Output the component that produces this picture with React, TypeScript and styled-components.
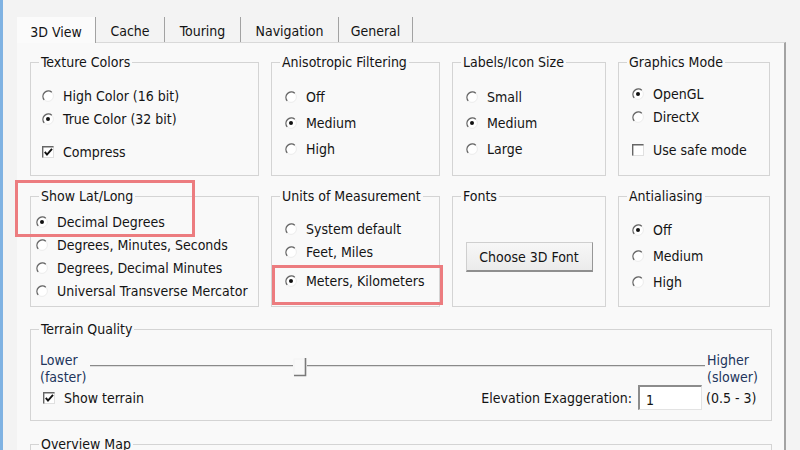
import React from "react"
import styled, { createGlobalStyle } from "styled-components"

const GlobalStyle = createGlobalStyle`
  html, body {
    margin: 0;
    padding: 0;
    overflow: hidden;
  }
  body {
    background: #f3f3f3;
    font-family: "DejaVu Sans Condensed", "DejaVu Sans", sans-serif;
    font-size: 14px;
    color: #141414;
  }
`

const tabs = [
  { text: "3D View", width: 79, active: true },
  { text: "Cache", width: 69 },
  { text: "Touring", width: 76 },
  { text: "Navigation", width: 98 },
  { text: "General", width: 74 },
]

const Radio = ({ checked }: { checked?: boolean }) => (
  <svg width="12" height="12" viewBox="0 0 12 12">
    <circle cx="6" cy="6" r="5.4" fill="#fff" stroke="#ececec" />
    <path d="M 9.8 2.2 A 5.4 5.4 0 0 0 2.2 9.8" fill="none" stroke="#666" strokeWidth="1.3" />
    {checked && <circle cx="6" cy="6" r="2" fill="#111" />}
  </svg>
)

const Check = ({ checked }: { checked?: boolean }) => (
  <svg width="12" height="12" viewBox="0 0 12 12">
    <rect x="0.5" y="0.5" width="11" height="11" fill="#fff" stroke="#e0e0e0" />
    <path d="M 0.7 11.5 V 0.7 H 11.5" fill="none" stroke="#666" strokeWidth="1.4" />
    {checked && <path d="M 2.8 5.8 L 5 8.6 L 10 2.8" fill="none" stroke="#111" strokeWidth="1.9" />}
  </svg>
)

type Item = { text: string; checked?: boolean; box?: boolean; extra?: number }

const groupsTop: { title: string; top: number; gap?: number; inset?: number; items: Item[] }[] = [
  {
    title: "Texture Colors",
    top: 14,
    inset: 11,
    items: [
      { text: "High Color (16 bit)" },
      { text: "True Color (32 bit)", checked: true },
      { text: "Compress", checked: true, box: true, extra: 10 },
    ],
  },
  {
    title: "Anisotropic Filtering",
    top: 15,
    gap: 3,
    items: [{ text: "Off" }, { text: "Medium", checked: true }, { text: "High" }],
  },
  {
    title: "Labels/Icon Size",
    top: 15,
    gap: 3,
    items: [{ text: "Small" }, { text: "Medium", checked: true }, { text: "Large" }],
  },
  {
    title: "Graphics Mode",
    top: 12,
    items: [
      { text: "OpenGL", checked: true },
      { text: "DirectX" },
      { text: "Use safe mode", box: true, extra: 10 },
    ],
  },
]

const OptionRows = ({ items }: { items: Item[] }) => (
  <>
    {items.map((item, i) => (
      <Option key={i} $extra={item.extra}>
        {item.box ? <Check checked={item.checked} /> : <Radio checked={item.checked} />}
        <span>{item.text}</span>
      </Option>
    ))}
  </>
)

const terrainValue = 33

const App = () => {
  return (
    <Window>
      <GlobalStyle />
      <TabStrip>
        {tabs.map((t) => (
          <Tab key={t.text} $width={t.width} $active={t.active}>
            {t.text}
          </Tab>
        ))}
      </TabStrip>
      <Panel>
        <TopGrid>
          {groupsTop.map((g) => (
            <Group key={g.title}>
              <Legend>{g.title}</Legend>
              <OptionList $top={g.top} $gap={g.gap} $inset={g.inset}>
                <OptionRows items={g.items} />
              </OptionList>
            </Group>
          ))}

          <Group>
            <Legend>Show Lat/Long</Legend>
            <OptionList $top={6} $inset={5}>
              <OptionRows
                items={[
                  { text: "Decimal Degrees", checked: true },
                  { text: "Degrees, Minutes, Seconds" },
                  { text: "Degrees, Decimal Minutes" },
                  { text: "Universal Transverse Mercator" },
                ]}
              />
            </OptionList>
          </Group>
          <Group>
            <Legend>Units of Measurement</Legend>
            <OptionList $top={13}>
              <OptionRows
                items={[
                  { text: "System default" },
                  { text: "Feet, Miles" },
                  { text: "Meters, Kilometers", checked: true, extra: 6 },
                ]}
              />
            </OptionList>
          </Group>
          <Group>
            <Legend>Fonts</Legend>
            <Button type="button">Choose 3D Font</Button>
          </Group>
          <Group>
            <Legend>Antialiasing</Legend>
            <OptionList $top={14} $gap={3}>
              <OptionRows items={[{ text: "Off", checked: true }, { text: "Medium" }, { text: "High" }]} />
            </OptionList>
          </Group>

          <Highlight $left={-15} $top={126} $width={180} $height={57} />
          <Highlight $left={242} $top={211} $width={171} $height={40} />
        </TopGrid>

        <Group $mt={14} $height={100}>
          <Legend>Terrain Quality</Legend>
          <TerrainBody>
            <SliderLabel>
              Lower
              <br />
              (faster)
            </SliderLabel>
            <Slider>
              <Track />
              <Thumb style={{ left: `${terrainValue}%` }}>
                <svg width="14" height="19" viewBox="0 0 14 19">
                  <path d="M 1 18 V 1 H 12" fill="none" stroke="#f4f4f4" strokeWidth="1.2" />
                  <path d="M 12.5 0 V 17.5 H 1" fill="none" stroke="#7a7a7a" strokeWidth="1.6" />
                </svg>
              </Thumb>
            </Slider>
            <SliderLabel $right>
              Higher
              <br />
              (slower)
            </SliderLabel>
            <BottomRow>
              <Option as="label" $inline>
                <Check checked />
                <span>Show terrain</span>
              </Option>
              <Field>
                <span>Elevation Exaggeration:</span>
                <Input defaultValue="1" />
              </Field>
            </BottomRow>
            <Range>(0.5 - 3)</Range>
          </TerrainBody>
        </Group>

        <Group $mt={15} $height={60}>
          <Legend>Overview Map</Legend>
        </Group>
      </Panel>
    </Window>
  )
}

export default App

const Window = styled.div`
  height: 450px;
  box-sizing: border-box;
  overflow: hidden;
  border-left: 3px solid #7fb2e2;
  padding: 17px 0 0 14px;
  background: #f3f3f3;
`

const TabStrip = styled.div`
  display: flex;
  height: 25px;
`

const Tab = styled.div<{ $width: number; $active?: boolean }>`
  width: ${(p) => p.$width}px;
  box-sizing: border-box;
  display: flex;
  align-items: center;
  justify-content: center;
  padding-top: 3px;
  border-right: 1px solid #a2a2a2;
  background: ${(p) => (p.$active ? "#fbfbfb" : "transparent")};
  position: relative;
  z-index: ${(p) => (p.$active ? 1 : 0)};
  height: ${(p) => (p.$active ? 26 : 25)}px;
  white-space: nowrap;
`

const Panel = styled.div`
  width: 769px;
  height: 420px;
  box-sizing: border-box;
  background: #f9f9f9;
  border-top: 1px solid #d9d9d9;
  border-right: 2px solid #a3a3a3;
  padding: 11px 12px 0 13px;
`

const TopGrid = styled.div`
  position: relative;
  display: grid;
  grid-template-columns: 229px 169px 154px 152px;
  grid-template-rows: 122px 119px;
  column-gap: 12px;
  row-gap: 12px;
`

const Group = styled.fieldset<{ $mt?: number; $height?: number }>`
  margin: ${(p) => p.$mt ?? 0}px 0 0 0;
  padding: 0;
  min-width: 0;
  box-sizing: border-box;
  border: 1px solid #d4d4d4;
  ${(p) => (p.$height ? `height: ${p.$height}px;` : "")}
`

const Legend = styled.legend`
  margin-left: 8px;
  padding: 0 2px;
  line-height: 16px;
`

const OptionList = styled.div<{ $top: number; $gap?: number; $inset?: number }>`
  display: flex;
  flex-direction: column;
  gap: ${(p) => p.$gap ?? 0}px;
  padding: ${(p) => p.$top}px 0 0 ${(p) => p.$inset ?? 13}px;
`

const Option = styled.label<{ $extra?: number; $inline?: boolean }>`
  display: flex;
  align-items: center;
  gap: 9px;
  height: 23px;
  margin-top: ${(p) => p.$extra ?? 0}px;
  white-space: nowrap;
  ${(p) => (p.$inline ? "padding-left: 3px;" : "")}
`

const Button = styled.button`
  display: block;
  margin: 38px auto 0;
  width: 127px;
  height: 30px;
  font: inherit;
  color: inherit;
  background: linear-gradient(#f7f7f7, #ebebeb);
  border: 1px solid #cfcfcf;
  border-right-color: #979797;
  border-bottom: 2px solid #8f8f8f;
  border-radius: 0;
  padding: 0;
`

const Highlight = styled.div<{ $left: number; $top: number; $width: number; $height: number }>`
  position: absolute;
  left: ${(p) => p.$left}px;
  top: ${(p) => p.$top}px;
  width: ${(p) => p.$width}px;
  height: ${(p) => p.$height}px;
  box-sizing: border-box;
  border: 3px solid #ec7c7f;
  pointer-events: none;
`

const TerrainBody = styled.div`
  display: grid;
  grid-template-columns: 50px 615px 1fr;
  grid-template-rows: 33px 25px;
  padding: 15px 0 0 9px;
`

const SliderLabel = styled.div<{ $right?: boolean }>`
  line-height: 17px;
  color: #22355c;
  padding-left: ${(p) => (p.$right ? 2 : 0)}px;
  white-space: nowrap;
`

const Slider = styled.div`
  position: relative;
  padding-top: 13px;
`

const Track = styled.div`
  height: 1px;
  background: #8a8a8a;
  border-bottom: 1px solid #dedede;
`

const Thumb = styled.div`
  position: absolute;
  top: 6px;
  width: 14px;
  height: 19px;
  background: #f9f9f9;
  line-height: 0;
`

const BottomRow = styled.div`
  grid-column: 1 / 3;
  display: flex;
  align-items: center;
  justify-content: space-between;
  padding-right: 3px;
`

const Field = styled.div`
  display: flex;
  align-items: center;
  gap: 6px;
`

const Input = styled.input`
  width: 64px;
  height: 25px;
  box-sizing: border-box;
  font: inherit;
  color: inherit;
  padding: 3px 0 0 6px;
  background: #fff;
  border: 1px solid #e3e3e3;
  border-top: 2px solid #8c8c8c;
  border-left: 2px solid #8c8c8c;
  outline: none;
`

const Range = styled.div`
  display: flex;
  align-items: center;
  padding-left: 1px;
  white-space: nowrap;
`
